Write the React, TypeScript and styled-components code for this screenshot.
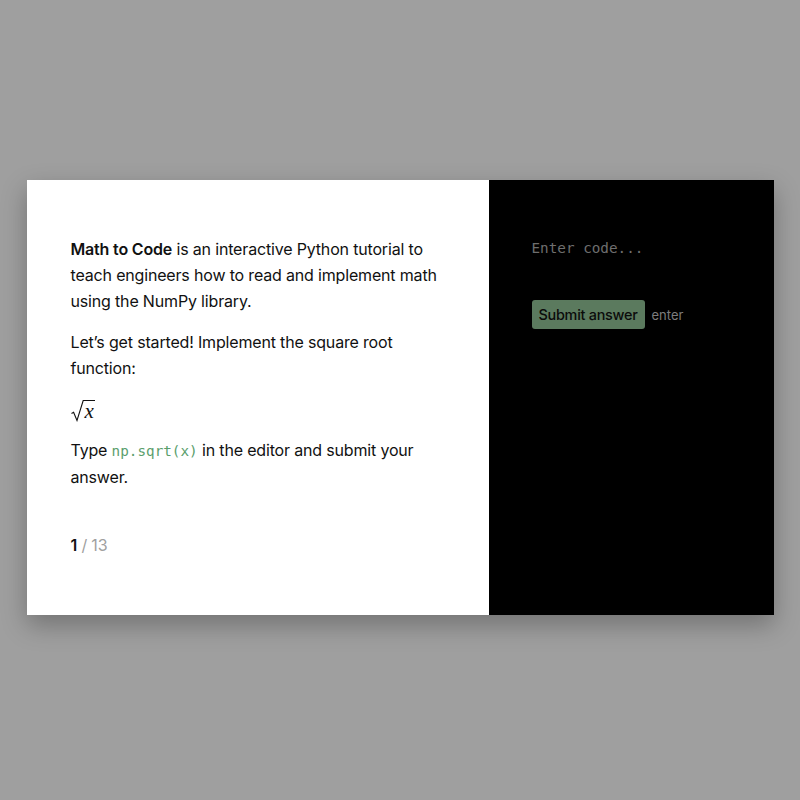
import React from 'react';
import styled, { createGlobalStyle } from 'styled-components';

const GlobalStyle = createGlobalStyle`
  html, body {
    margin: 0;
    padding: 0;
    background: #9f9f9f;
  }
  body {
    font-family: Inter, "Noto Sans", sans-serif;
    -webkit-font-smoothing: antialiased;
  }
`;

const Page = styled.div`
  width: 800px;
  height: 800px;
  display: flex;
  justify-content: center;
  align-items: flex-start;
  padding-top: 180px;
  box-sizing: border-box;
`;

const Card = styled.div`
  width: 747px;
  height: 435px;
  display: grid;
  grid-template-columns: 462px 1fr;
  box-shadow: 0 10px 24px rgba(0, 0, 0, 0.28);
`;

const Lesson = styled.div`
  background: #fff;
  padding: 56px 44px 0;
  color: #111;
  font-size: 16px;
  line-height: 26px;
  letter-spacing: -0.17px;

  p {
    margin: 0 0 15px;
  }
  strong {
    font-weight: 600;
  }
`;

const Code = styled.code`
  font-family: "DejaVu Sans Mono", "Liberation Mono", monospace;
  font-size: 14.3px;
  color: #5a9e6c;
  letter-spacing: 0;
`;

const MathLine = styled.div`
  display: flex;
  align-items: flex-end;
  height: 26px;
  margin: 0 0 15px;
`;

const Radical = styled.span`
  display: inline-flex;
  align-items: flex-end;
  svg {
    display: block;
  }
`;

const Radicand = styled.span`
  font-family: "Liberation Serif", "DejaVu Serif", serif;
  font-style: italic;
  font-size: 21px;
  line-height: 18px;
  border-top: 1px solid #111;
  padding: 1px 1px 2px 1px;
`;

const Progress = styled.div`
  margin-top: 42px;
  font-size: 16px;
  line-height: 26px;
  color: #a0a0a0;
  b {
    color: #111;
    font-weight: 600;
  }
`;

const Editor = styled.div`
  background: #000;
  padding: 58px 44px 0 43px;
`;

const Placeholder = styled.div`
  font-family: "DejaVu Sans Mono", "Liberation Mono", monospace;
  font-size: 14.3px;
  line-height: 20px;
  color: #6e6e6e;
  height: 62px;
`;

const Actions = styled.div`
  display: flex;
  align-items: center;
  gap: 7px;
`;

const SubmitButton = styled.button`
  height: 29px;
  padding: 0 7px;
  border: none;
  border-radius: 3px;
  background: #5b7a5e;
  color: #0b0b0b;
  font-family: Inter, "Noto Sans", sans-serif;
  font-size: 14.4px;
  font-weight: 500;
  letter-spacing: -0.25px;
`;

const Hint = styled.span`
  font-size: 13px;
  color: #7d7d7d;
`;

export default function App() {
  return (
    <Page>
      <GlobalStyle />
      <Card>
        <Lesson>
          <p>
            <strong>Math to Code</strong> is an interactive Python tutorial to
            teach engineers how to read and implement math using the NumPy
            library.
          </p>
          <p>Let’s get started! Implement the square root function:</p>
          <MathLine>
            <Radical>
              <svg width="13" height="22" viewBox="0 0 13 22">
                <path
                  d="M0.5 13.5 L2.6 12.3 L6 20.5 L12.2 0.5 L13 0.5"
                  fill="none"
                  stroke="#111"
                  strokeWidth="1.1"
                />
              </svg>
              <Radicand>x</Radicand>
            </Radical>
          </MathLine>
          <p>
            Type <Code>np.sqrt(x)</Code> in the editor and submit your answer.
          </p>
          <Progress>
            <b>1</b> / 13
          </Progress>
        </Lesson>
        <Editor>
          <Placeholder>Enter code...</Placeholder>
          <Actions>
            <SubmitButton>Submit answer</SubmitButton>
            <Hint>enter</Hint>
          </Actions>
        </Editor>
      </Card>
    </Page>
  );
}
